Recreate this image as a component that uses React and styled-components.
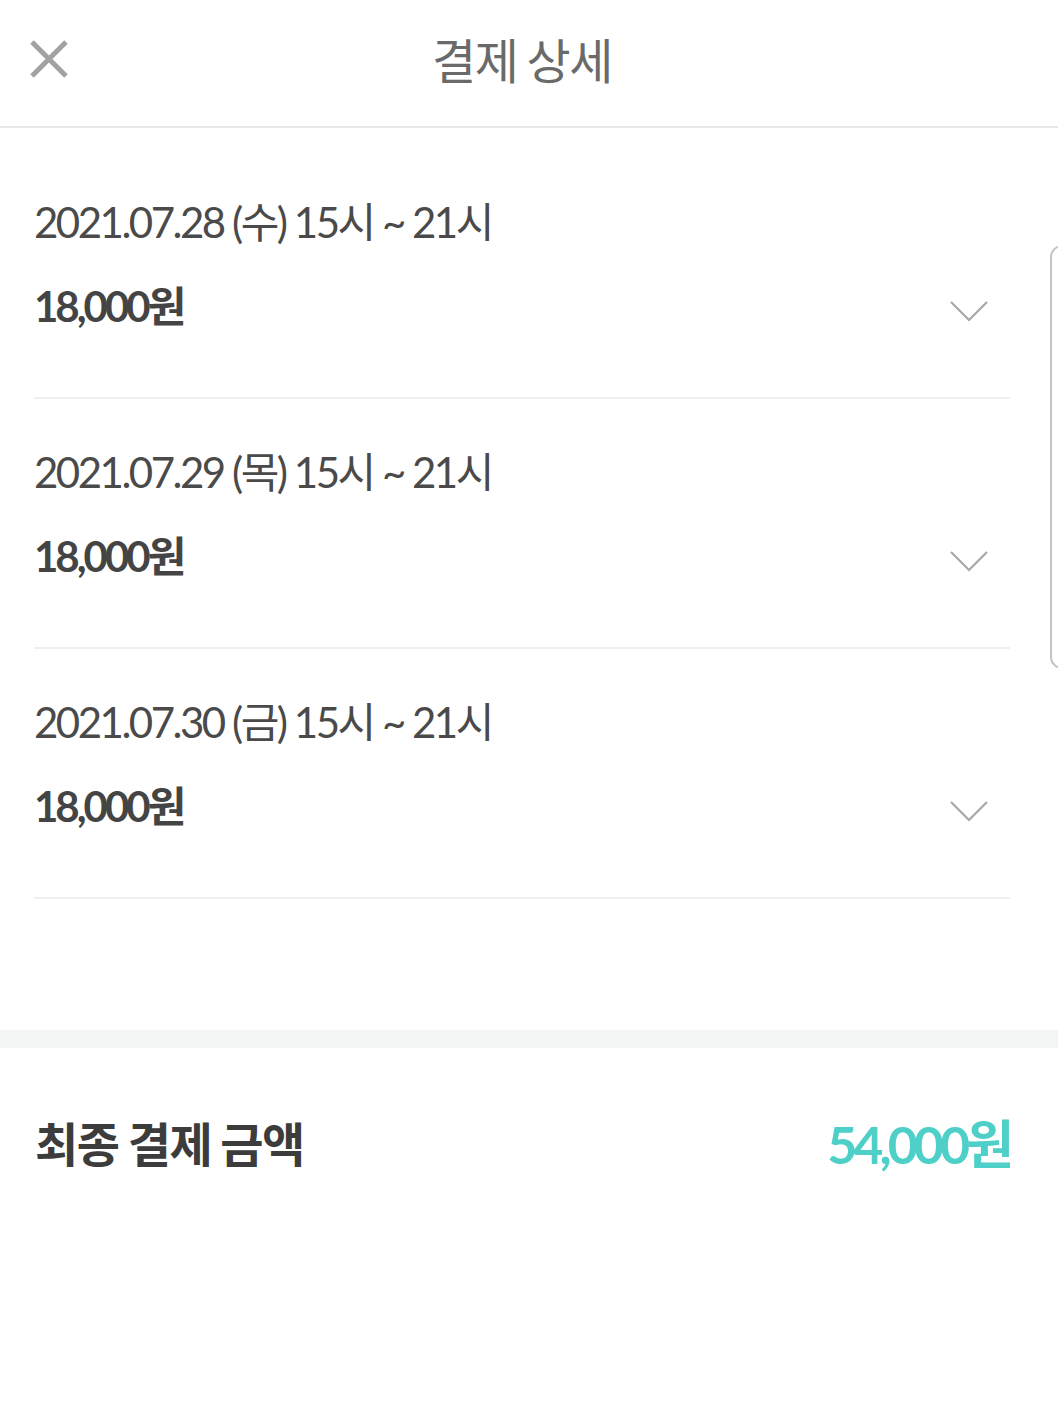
import React from 'react';
import styled, { createGlobalStyle } from 'styled-components';

const items = [
  { date: '2021.07.28 (수) 15시 ~ 21시', price: '18,000원' },
  { date: '2021.07.29 (목) 15시 ~ 21시', price: '18,000원' },
  { date: '2021.07.30 (금) 15시 ~ 21시', price: '18,000원' },
];

export default function App() {
  return (
    <Page>
      <GlobalStyle />
      <Header>
        <CloseButton aria-label="닫기">
          <svg width="38" height="38" viewBox="0 0 38 38">
            <path d="M2 2 L36 36 M36 2 L2 36" stroke="#a2a2a2" strokeWidth="5" />
          </svg>
        </CloseButton>
        <Title>결제 상세</Title>
        <span />
      </Header>
      <List>
        {items.map((item, index) => {
          return (
            <Item key={index}>
              <DateLine>{item.date}</DateLine>
              <PriceRow>
                <Price>{item.price}</Price>
                <Chevron>
                  <svg width="38" height="22" viewBox="0 0 38 22">
                    <path d="M1 2 L19 20 L37 2" fill="none" stroke="#a8a8a8" strokeWidth="2.2" />
                  </svg>
                </Chevron>
              </PriceRow>
            </Item>
          );
        })}
      </List>
      <Band />
      <TotalRow>
        <TotalLabel>최종 결제 금액</TotalLabel>
        <TotalAmount>54,000원</TotalAmount>
      </TotalRow>
      <EdgeHandle />
    </Page>
  );
}

const GlobalStyle = createGlobalStyle`
  html, body {
    margin: 0;
    padding: 0;
    background: #ffffff;
  }
  body {
    font-family: Lato, "Noto Sans CJK KR", sans-serif;
  }
`;

const Page = styled.div`
  position: relative;
  width: 1058px;
  min-height: 1414px;
  background: #fff;
  overflow: hidden;
`;

const Header = styled.header`
  box-sizing: border-box;
  height: 128px;
  padding-bottom: 10px;
  display: grid;
  grid-template-columns: 1fr auto 1fr;
  align-items: center;
  border-bottom: 2px solid #e8e8e8;
`;

const CloseButton = styled.div`
  display: flex;
  align-items: center;
  padding-left: 30px;
  padding-top: 2px;
`;

const Title = styled.h1`
  margin: 0 14px 0 0;
  font-family: "Noto Sans CJK KR", sans-serif;
  font-weight: 400;
  font-size: 48px;
  letter-spacing: -1.5px;
  color: #6a6a6a;
`;

const List = styled.div`
  padding: 21px 48px 0 34px;
`;

const Item = styled.div`
  padding: 48px 22px 66px 0;
  border-bottom: 2px solid #eff1f1;
`;

const DateLine = styled.div`
  font-size: 42px;
  line-height: 50px;
  letter-spacing: -2.5px;
  color: #4a4a4a;
`;

const PriceRow = styled.div`
  display: flex;
  justify-content: space-between;
  align-items: center;
  margin-top: 34px;
`;

const Price = styled.div`
  font-size: 42px;
  font-weight: 700;
  line-height: 50px;
  letter-spacing: -3px;
  color: #444444;
`;

const Chevron = styled.div`
  display: flex;
  margin-top: 10px;
`;

const Band = styled.div`
  height: 18px;
  margin-top: 131px;
  background: #f4f6f6;
`;

const TotalRow = styled.div`
  height: 186px;
  display: flex;
  justify-content: space-between;
  align-items: center;
  padding: 0 48px 0 35px;
`;

const TotalLabel = styled.div`
  font-family: "Noto Sans CJK KR", sans-serif;
  font-size: 47px;
  font-weight: 700;
  letter-spacing: -1.5px;
  color: #3c3c3c;
`;

const TotalAmount = styled.div`
  font-size: 52px;
  font-weight: 700;
  letter-spacing: -4px;
  color: #4ecfc8;
`;

const EdgeHandle = styled.div`
  position: absolute;
  left: 1050px;
  top: 245px;
  width: 24px;
  height: 424px;
  box-sizing: border-box;
  border: 2px solid #c4c4c4;
  border-radius: 12px;
`;
